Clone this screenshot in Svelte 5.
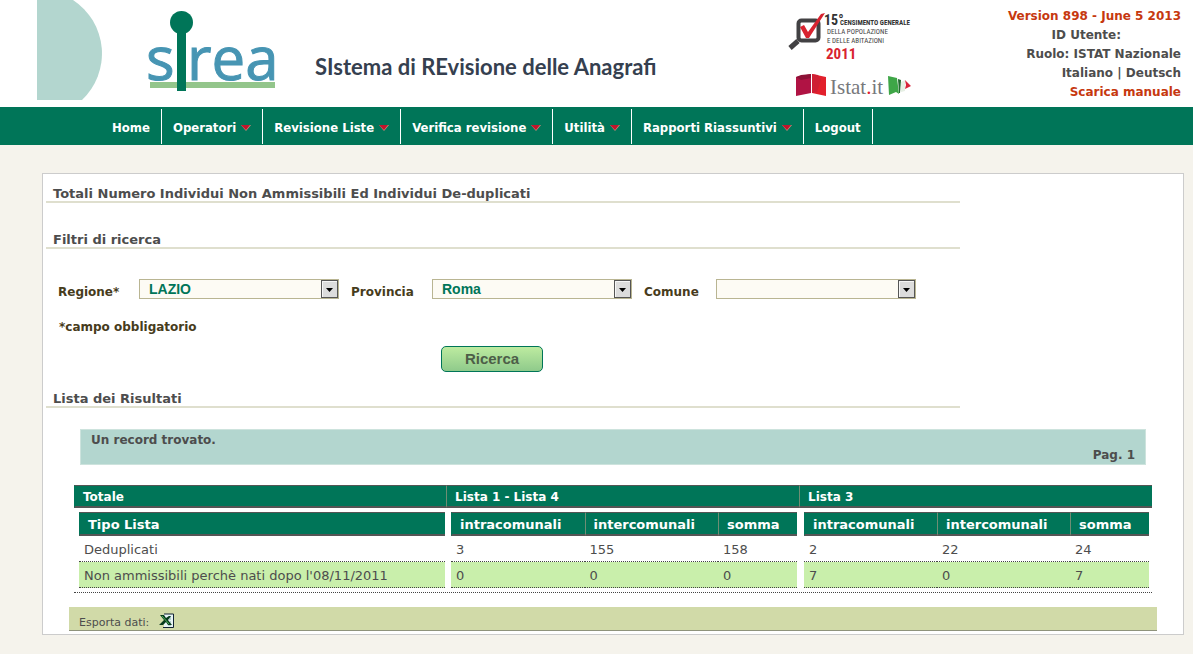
<script>
  const menu = [
    { label: 'Home', drop: false },
    { label: 'Operatori', drop: true },
    { label: 'Revisione Liste', drop: true },
    { label: 'Verifica revisione', drop: true },
    { label: 'Utilità', drop: true },
    { label: 'Rapporti Riassuntivi', drop: true },
    { label: 'Logout', drop: false },
  ];

  const filters = [
    { id: 'regione', label: 'Regione*', value: 'LAZIO' },
    { id: 'provincia', label: 'Provincia', value: 'Roma' },
    { id: 'comune', label: 'Comune', value: '' },
  ];

  const counts = ['intracomunali', 'intercomunali', 'somma'];

  const groups = [
    {
      title: 'Totale',
      columns: ['Tipo Lista'],
      rows: [['Deduplicati'], ["Non ammissibili perchè nati dopo l'08/11/2011"]],
    },
    { title: 'Lista 1 - Lista 4', columns: counts, rows: [[3, 155, 158], [0, 0, 0]] },
    { title: 'Lista 3', columns: counts, rows: [[2, 22, 24], [7, 0, 7]] },
  ];
</script>

<header class="top">
  <svg class="disc" width="65" height="100" viewBox="0 0 65 100" aria-hidden="true">
    <path d="M0 0H36A64 64 0 0 1 45 100H0Z" fill="#b3d6cf" />
  </svg>

  <svg class="logo" width="128" height="84" viewBox="0 0 128 84" role="img" aria-label="sirea">
    <g class="logo-text">
      <text x="-3" y="72">s</text>
      <text x="38" y="72">rea</text>
    </g>
    <rect x="1" y="74" width="125" height="6" fill="#93c58b" />
    <rect x="28" y="20" width="9" height="63" fill="#007558" />
    <circle cx="32.500" cy="14.500" r="11.500" fill="#007558" />
  </svg>

  <h1>SIstema di REvisione delle Anagrafi</h1>

  <svg class="partners" width="130" height="90" viewBox="0 0 130 90" role="img" aria-label="15° Censimento generale, Istat.it">
    <path d="M11 33L3 40" stroke="#424143" stroke-width="5" />
    <rect x="11.500" y="12.500" width="20" height="20" rx="3" fill="#fff" stroke="#424143" stroke-width="4" />
    <path d="M27 8L36 3V14Z" fill="#fff" />
    <path d="M34 6L38 5L22 30H19L13 19L17 17L21 24Z" fill="#d8232f" />
    <g class="census">
      <text x="37" y="17" class="big">15°</text>
      <text x="53" y="17" class="strong">CENSIMENTO GENERALE</text>
      <text x="40" y="26">DELLA POPOLAZIONE</text>
      <text x="40" y="35">E DELLE ABITAZIONI</text>
      <text x="39" y="51" class="year">2011</text>
    </g>
    <path d="M9 69L24 66V85L9 88Z" fill="#b01344" />
    <path d="M9 69L14 67L24 66V70L14 72Z" fill="#8c1236" />
    <path d="M25 66L39 69V88L25 85Z" fill="#e2202c" />
    <path d="M25 66L31 67L34 72L30 84L25 85Z" fill="#cf1f33" />
    <text x="43" y="86" class="istat">Istat<tspan fill="#e2202c">.</tspan>it</text>
    <path d="M101 68L110 70L112 86L109 84L102 87Z" fill="#3ea647" />
    <path d="M111 71L114 72L113 85L112 85Z" fill="#236b30" />
    <path d="M114 74L118 72V83L114 84Z" fill="#e6efe4" />
    <path d="M118 72L124 78L118 81L119 77Z" fill="#d8233a" />
  </svg>

  <div class="info">
    <span class="accent">Version 898 - June 5 2013</span>
    <span class="user">ID Utente:</span>
    <span>Ruolo: ISTAT Nazionale</span>
    <span><a href="#it">Italiano</a> | <a href="#de">Deutsch</a></span>
    <a class="accent" href="#manuale">Scarica manuale</a>
  </div>
</header>

<nav>
  {#each menu as item}
    <a href="#menu">
      {item.label}
      {#if item.drop}
        <svg width="10" height="6" viewBox="0 0 10 6" aria-hidden="true">
          <path d="M0 0H10L5 6Z" fill="#d08a7a" />
          <path d="M0 0H9L5 5Z" fill="#c0142c" />
        </svg>
      {/if}
    </a>
  {/each}
</nav>

<main>
  <h2>Totali Numero Individui Non Ammissibili Ed Individui De-duplicati</h2>
  <h2 class="filters-title">Filtri di ricerca</h2>

  <form onsubmit={(e) => e.preventDefault()}>
    <div class="fields">
      {#each filters as f}
        <div class="field {f.id}">
          <label for={f.id}>{f.label}</label>
          <span class="select">
            <select id={f.id}><option>{f.value}</option></select>
            <svg width="17" height="18" viewBox="0 0 17 18" aria-hidden="true">
              <rect x="0.500" y="0.500" width="16" height="17" fill="#dcdcdc" stroke="#555" />
              <path d="M1.500 17V1.500H16" stroke="#f6f6f6" fill="none" />
              <path d="M5 8H12L8.500 12Z" fill="#000" />
            </svg>
          </span>
        </div>
      {/each}
    </div>
    <p class="note">*campo obbligatorio</p>
    <button type="submit">Ricerca</button>
  </form>

  <h2 class="results-title">Lista dei Risultati</h2>

  <div class="banner">
    <span>Un record trovato.</span>
    <span class="page">Pag. 1</span>
  </div>

  <table class="outer">
    <thead>
      <tr>
        {#each groups as g}<th>{g.title}</th>{/each}
      </tr>
    </thead>
    <tbody>
      <tr>
        {#each groups as g}
          <td>
            <table class="inner">
              <thead>
                <tr>
                  {#each g.columns as c}<th>{c}</th>{/each}
                </tr>
              </thead>
              <tbody>
                {#each g.rows as row}
                  <tr>
                    {#each row as cell}<td>{cell}</td>{/each}
                  </tr>
                {/each}
              </tbody>
            </table>
          </td>
        {/each}
      </tr>
    </tbody>
  </table>

  <div class="export">
    <span>Esporta dati:</span>
    <a href="#excel" aria-label="Esporta in Excel">
      <svg width="16" height="16" viewBox="0 0 16 16" aria-hidden="true">
        <path d="M5 1H15V14H5Z" fill="#e6f3f5" />
        <path d="M5 1H14.500V14.500H4" fill="none" stroke="#123" />
        <path d="M9 4H12M10 6H12M11 9H12M9 12H12" stroke="#7fa9a5" />
        <path d="M1 2H5L7 5L10 3H12L9 7L13 12H9L7 9L4 12H0L5 7Z" fill="#073b1c" />
        <path d="M3 3L10 11" stroke="#4fb45b" />
      </svg>
    </a>
  </div>
</main>

<style>
  :global(body) {
    background: #f5f3ec;
    font-family: 'DejaVu Sans', Verdana, sans-serif;
    font-size: 13px;
    color: #4d4d4d;
  }
  a {
    color: inherit;
    text-decoration: none;
  }
  .top {
    display: flex;
    align-items: flex-start;
    height: 107px;
    padding: 0 12px 0 37px;
    background: #fff;
  }
  .top svg {
    flex: none;
  }
  .logo {
    margin: 8px 0 0 47px;
    overflow: visible;
  }
  .logo-text {
    font: 60px 'Open Sans', sans-serif;
    fill: #4795b3;
    stroke: #4795b3;
    stroke-width: 1px;
  }
  h1 {
    margin: 54px 0 0 38px;
    font: bold 22px/26px Lato, 'Open Sans', sans-serif;
    color: #35404f;
    white-space: nowrap;
  }
  .partners {
    margin: 8px 0 0 auto;
  }
  .census {
    font: 7px 'Roboto Condensed', 'Liberation Sans Narrow', 'Liberation Sans', sans-serif;
    fill: #444;
  }
  .big {
    font-size: 14px;
    font-weight: bold;
    fill: #333;
  }
  .strong {
    font-weight: bold;
    fill: #333;
  }
  .year {
    font-size: 15px;
    font-weight: bold;
    fill: #d8232f;
  }
  .istat {
    font: 21px 'Liberation Serif', serif;
    fill: #77787c;
  }
  .info {
    display: flex;
    flex-direction: column;
    align-items: flex-end;
    width: 170px;
    margin: 7px 0 0 94px;
    font-size: 12px;
    font-weight: bold;
    line-height: 19px;
    white-space: nowrap;
  }
  .accent {
    color: #c6380f;
  }
  .user {
    margin-right: 60px;
  }
  nav {
    display: flex;
    padding: 2px 0 1px 101px;
    background: #007558;
  }
  nav a {
    display: flex;
    align-items: center;
    gap: 5px;
    box-sizing: border-box;
    height: 35px;
    padding: 2px 11px 0;
    border-right: 1px solid #fff;
    color: #fff;
    font-family: 'DejaVu Sans Condensed', 'DejaVu Sans', sans-serif;
    font-size: 13px;
    font-weight: bold;
    white-space: nowrap;
  }
  main {
    margin: 28px 9px 19px 42px;
    padding: 11px 26px 3px;
    border: 1px solid #ccc;
    background: #fff;
  }
  h2 {
    max-width: 907px;
    margin: 0 0 0 -23px;
    padding: 1px 0 0 7px;
    border-bottom: 2px solid #dfdfce;
    font-size: 13px;
    line-height: 15px;
  }
  .filters-title {
    margin-top: 28px;
  }
  .fields {
    display: flex;
    gap: 12px;
    margin: 30px 0 0 -11px;
  }
  .field {
    display: flex;
    align-items: center;
    font-size: 12px;
    font-weight: bold;
    color: #473c1c;
  }
  .field label {
    width: 81px;
    padding-top: 5px;
  }
  .comune label {
    width: 72px;
  }
  .select {
    position: relative;
    width: 200px;
    height: 20px;
  }
  select {
    appearance: none;
    box-sizing: border-box;
    width: 100%;
    height: 20px;
    padding: 0 20px 0 9px;
    border: 1px solid #b9b592;
    border-radius: 0;
    background: #fdfbf4;
    color: #007558;
    font: bold 14px/18px 'Liberation Sans', Arial, sans-serif;
  }
  .select svg {
    position: absolute;
    top: 1px;
    right: 1px;
    pointer-events: none;
  }
  .note {
    margin: 20px 0 0 -10px;
    font-size: 12px;
    font-weight: bold;
    line-height: 16px;
    color: #473c1c;
  }
  button {
    display: block;
    width: 102px;
    height: 26px;
    margin: 11px 0 0 372px;
    padding: 0;
    border: 1px solid #007558;
    border-radius: 5px;
    background: linear-gradient(#bdeba0, #8fca8b);
    color: #4d5e48;
    font: bold 15px/24px 'Liberation Sans', Arial, sans-serif;
  }
  .results-title {
    margin-top: 18px;
  }
  .banner {
    display: flex;
    flex-direction: column;
    margin: 21px 11px 0;
    padding: 3px 10px 1px;
    border: 1px solid #cde3dd;
    background: #b3d6cf;
    font-size: 12px;
    font-weight: bold;
    line-height: 15px;
  }
  .page {
    align-self: flex-end;
  }
  .outer {
    width: calc(100% - 10px);
    margin: 20px 5px 0;
    border-collapse: separate;
    border-spacing: 0;
    table-layout: fixed;
    border-bottom: 1px dotted #444;
  }
  .outer > thead th {
    box-sizing: border-box;
    width: 353px;
    height: 23px;
  }
  .outer > thead th:first-child {
    width: 372px;
  }
  th {
    padding: 2px 8px 0;
    border-top: 1px solid #555;
    border-bottom: 2px solid #555;
    border-left: 1px solid #6f8d74;
    background: #007558;
    color: #fff;
    font-size: 12px;
    line-height: 18px;
    text-align: left;
  }
  th:first-child {
    border-left-color: #007558;
  }
  .outer > thead th:not(:first-child) {
    border-left-color: #6f8d74;
  }
  .outer > tbody > tr > td {
    padding: 4px 2px 4px 5px;
  }
  .outer > tbody > tr > td:first-child {
    padding-right: 1px;
  }
  .outer > tbody > tr > td:last-child {
    padding-right: 3px;
  }
  .inner {
    width: 100%;
    border-collapse: separate;
    border-spacing: 0;
    table-layout: fixed;
  }
  .inner th {
    height: 19px;
    font-size: 13px;
  }
  .inner th:last-child:not(:first-child) {
    width: 62px;
  }
  .inner td {
    height: 23px;
    padding: 2px 5px 0;
    border-bottom: 1px dotted #444;
    line-height: 23px;
    white-space: nowrap;
  }
  .inner tbody tr:last-child td {
    background: #c9efab;
  }
  .export {
    display: flex;
    align-items: center;
    gap: 10px;
    height: 23px;
    margin-top: 14px;
    padding-left: 10px;
    border-bottom: 1px solid #8f937c;
    background: #d1daa8;
    font-size: 11px;
  }
  .export span {
    padding-top: 8px;
  }
  .export a {
    padding-top: 4px;
  }
  .export svg {
    display: block;
  }
</style>
